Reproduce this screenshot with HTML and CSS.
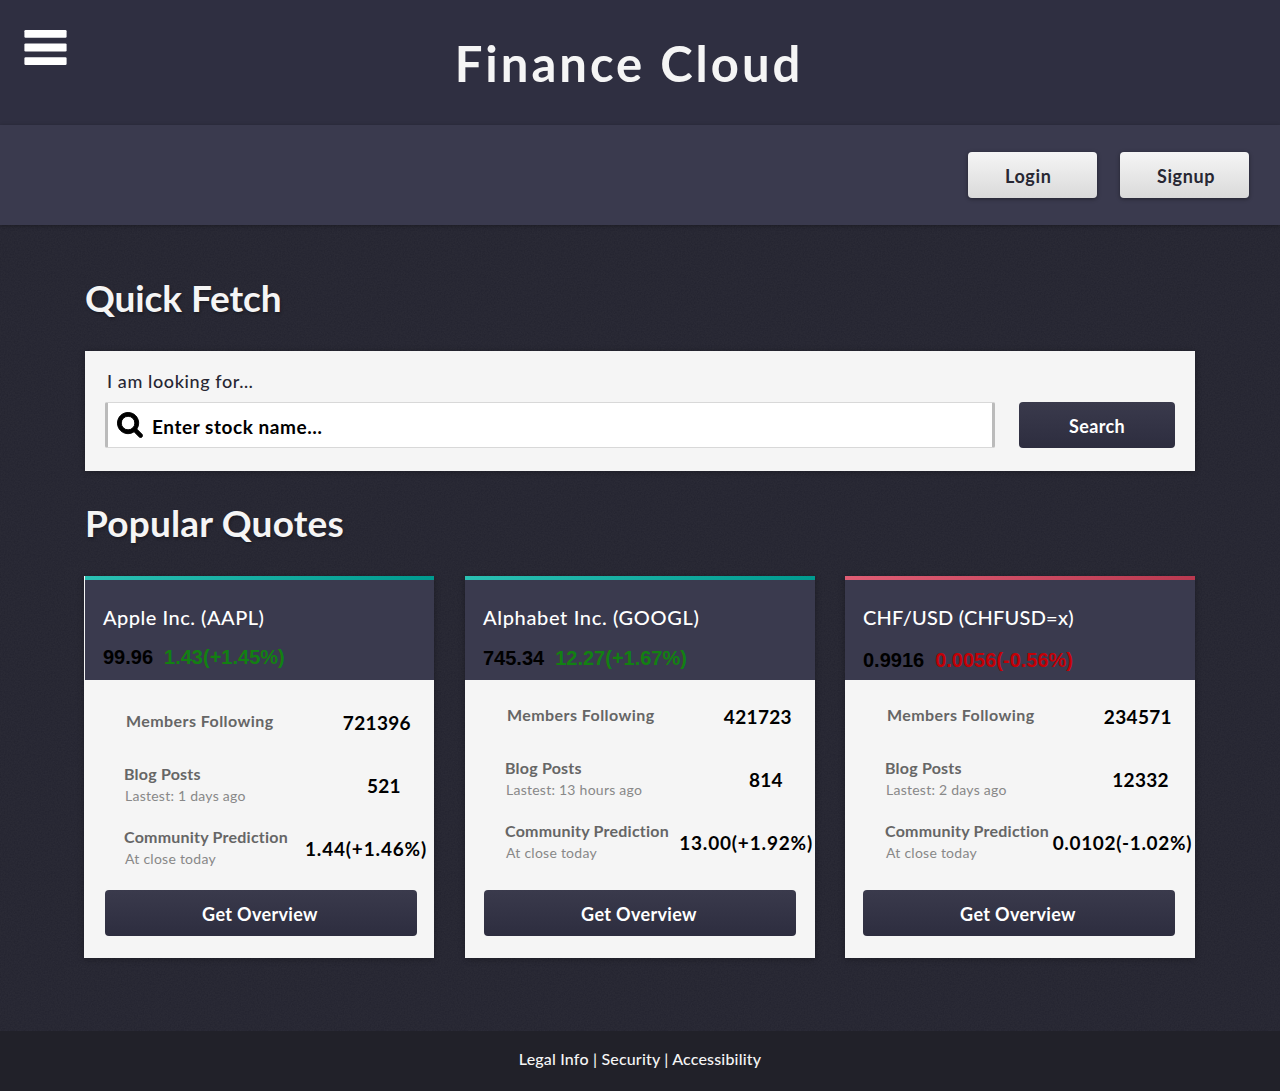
FILE: index.html
```html
<!DOCTYPE html>
<html lang="en">
<head>
<meta charset="utf-8">
<title>Finance Cloud</title>
<link rel="stylesheet" href="styles.css">
</head>
<body>
<header class="masthead">
  <button class="menu" aria-label="Menu">
    <svg width="43" height="36" viewBox="0 0 43 36" fill="#fff"><rect x=".4" width="42.2" height="7.8" rx="1.2"/><rect x=".4" y="13.4" width="42.200" height="8" rx="1.2"/><rect x=".4" y="27.2" width="42.200" height="7.800" rx="1.2"/></svg>
  </button>
  <h1 class="brand">Finance Cloud</h1>
</header>
<nav class="account">
  <a class="btn btn-light">Login</a>
  <a class="btn btn-light">Signup</a>
</nav>
<main class="content">
  <h2 class="heading">Quick Fetch</h2>
  <section class="fetch">
    <div class="field">
      <label class="field-label">I am looking for…</label>
      <div class="input">
        <svg class="glass" width="26" height="26" viewBox="-30 -30 1724 1724"><path d="M1152 704q0-185-131.500-316.500t-316.500-131.500-316.500 131.500-131.500 316.500 131.500 316.500 316.500 131.500 316.500-131.500 131.500-316.500zm512 832q0 52-38 90t-90 38q-54 0-90-38l-343-342q-179 124-399 124-143 0-273.500-55.500t-225-150-150-225-55.500-273.500 55.500-273.500 150-225 225-150 273.500-55.500 273.500 55.500 225 150 150 225 55.500 273.500q0 220-124 399l343 343q37 37 37 90z"/></svg>
        <span class="placeholder">Enter stock name…</span>
      </div>
    </div>
    <a class="btn btn-dark btn-search">Search</a>
  </section>
  <h2 class="heading heading-popular">Popular Quotes</h2>
  <section class="cards">
    <article class="card card-aapl">
      <header class="card-head up">
        <h3 class="name">Apple Inc. (AAPL)</h3>
        <p class="price"><span>99.96</span><span class="gain">1.43(+1.45%)</span></p>
      </header>
      <div class="stats">
        <div class="stat members">
          <div><p class="stat-name">Members Following</p></div>
          <p class="value">721396</p>
        </div>
        <div class="stat posts">
          <div><p class="stat-name">Blog Posts</p><p class="note">Lastest: 1 days ago</p></div>
          <p class="value">521</p>
        </div>
        <div class="stat prediction">
          <div><p class="stat-name">Community Prediction</p><p class="note">At close today</p></div>
          <p class="value">1.44(+1.46%)</p>
        </div>
      </div>
      <a class="btn btn-dark btn-overview">Get Overview</a>
    </article>
    <article class="card card-googl">
      <header class="card-head up">
        <h3 class="name">Alphabet Inc. (GOOGL)</h3>
        <p class="price"><span>745.34</span><span class="gain">12.27(+1.67%)</span></p>
      </header>
      <div class="stats">
        <div class="stat members">
          <div><p class="stat-name">Members Following</p></div>
          <p class="value">421723</p>
        </div>
        <div class="stat posts">
          <div><p class="stat-name">Blog Posts</p><p class="note">Lastest: 13 hours ago</p></div>
          <p class="value">814</p>
        </div>
        <div class="stat prediction">
          <div><p class="stat-name">Community Prediction</p><p class="note">At close today</p></div>
          <p class="value">13.00(+1.92%)</p>
        </div>
      </div>
      <a class="btn btn-dark btn-overview">Get Overview</a>
    </article>
    <article class="card card-chf">
      <header class="card-head down">
        <h3 class="name">CHF/USD (CHFUSD=x)</h3>
        <p class="price"><span>0.9916</span><span class="loss">0.0056(-0.56%)</span></p>
      </header>
      <div class="stats">
        <div class="stat members">
          <div><p class="stat-name">Members Following</p></div>
          <p class="value">234571</p>
        </div>
        <div class="stat posts">
          <div><p class="stat-name">Blog Posts</p><p class="note">Lastest: 2 days ago</p></div>
          <p class="value">12332</p>
        </div>
        <div class="stat prediction">
          <div><p class="stat-name">Community Prediction</p><p class="note">At close today</p></div>
          <p class="value">0.0102(-1.02%)</p>
        </div>
      </div>
      <a class="btn btn-dark btn-overview">Get Overview</a>
    </article>
  </section>
</main>
<footer class="footer">Legal Info | Security | Accessibility</footer>
</body>
</html>
```
FILE: styles.css
```css
* { box-sizing: border-box; margin: 0; padding: 0; }
body {
  min-height: 1091px;
  font-family: Lato, "Liberation Sans", sans-serif;
  background-color: #23232f;
  background-image: url("data:image/svg+xml,%3Csvg xmlns='http://www.w3.org/2000/svg' width='200' height='200'%3E%3Cfilter id='n'%3E%3CfeTurbulence type='fractalNoise' baseFrequency='.7' numOctaves='2' stitchTiles='stitch'/%3E%3CfeColorMatrix type='saturate' values='0'/%3E%3C/filter%3E%3Crect width='200' height='200' filter='url(%23n)' opacity='.06'/%3E%3C/svg%3E");
  display: flex;
  flex-direction: column;
}
.masthead { height: 125px; background: #2f2f41; display: grid; grid-template-columns: 67px 1fr 91px; align-items: start; }
.menu { border: 0; background: none; padding: 30px 0 0 24px; display: flex; }
.brand { font-size: 49px; line-height: 60px; padding: 33px 0 0 2px; letter-spacing: 3px; color: #f5f5f5; text-align: center; }
.account { height: 100px; background: #3a3a4e; display: flex; justify-content: flex-end; gap: 23px; padding: 27px 31px 0 0; box-shadow: 0 1px 4px rgba(0,0,0,.3); }
.btn { display: block; height: 46px; border-radius: 4px; font-size: 18px; font-weight: 700; line-height: 48px; white-space: nowrap; }
.btn-light { width: 129px; padding-left: 37px; letter-spacing: .6px; color: #272733; background: linear-gradient(#f5f5f5, #dadada); box-shadow: 0 1px 4px rgba(0,0,0,.4); }
.btn-dark { color: #fff; text-align: center; letter-spacing: .35px; background: linear-gradient(#3a3a4c, #2d2d3f); }
.content { flex: 1; padding: 49px 85px 0 84px; }
.heading { font-size: 37px; line-height: 48px; height: 48px; letter-spacing: -.1px; color: #f5f5f5; text-shadow: 1px 2px 3px rgba(0,0,0,.3); padding-left: 1px; }
.fetch { height: 120px; margin: 29px 0 0 1px; background: #f5f5f5; box-shadow: 0 1px 6px rgba(0,0,0,.3); padding: 20px; display: flex; gap: 24px; align-items: flex-start; }
.field { flex: 1; }
.field-label { display: block; height: 31px; line-height: 20px; font-size: 18px; font-weight: 500; letter-spacing: .6px; padding-left: 2px; color: #272733; }
.input { height: 46px; background: #fff; border: 1px solid #d8d8d8; border-width: 1px 3px; border-left-color: #bbb; border-right-color: #bbb; border-radius: 2px; display: flex; padding-left: 9px; gap: 9px; align-items: flex-start; }
.glass { margin-top: 8.5px; stroke: #000; stroke-width: 60px; }
.placeholder { font-size: 19px; font-weight: 700; letter-spacing: .55px; line-height: 48px; }
.btn-search { width: 156px; margin-top: 31px; }
.heading-popular { margin-top: 28px; letter-spacing: .2px; }
.cards { display: flex; margin-top: 29px; }
.card { width: 350px; height: 382px; background: #f5f5f5; box-shadow: 0 1px 6px rgba(0,0,0,.3); }
.card-aapl { margin-right: 31px; }
.card-googl { margin-right: 30px; }
.card-head { height: 104px; background: #3a3a4e; padding: 25px 18px 0; border-top: 4px solid; }
.card-aapl .card-head { margin-left: 1px; }
.up { border-image: linear-gradient(90deg, #2bc0b3, #009a8f) 4 0 0 0; }
.down { border-image: linear-gradient(90deg, #df5d74, #b93950) 4 0 0 0; }
.name { font-size: 20px; font-weight: 500; line-height: 24px; height: 24px; letter-spacing: .5px; color: #fff; }
.card-googl .name { letter-spacing: .65px; }
.card-chf .name { letter-spacing: .22px; }
.price { display: flex; gap: 11px; font: 700 20px/24px "Liberation Sans", Arial, sans-serif; padding-top: 16px; }
.card-googl .price { padding-top: 17px; }
.card-chf .price { padding-top: 19px; }
.gain { color: #128012; }
.loss { color: #c40006; }
.stats { height: 210px; padding-top: 25px; }
.card-aapl .stats { padding-top: 31px; }
.stat { display: flex; justify-content: space-between; padding-left: 40px; height: 63px; }
.members { padding-left: 42px; height: 53px; }
.stat-name { font-size: 16px; font-weight: 700; line-height: 20px; letter-spacing: .22px; color: #666; }
.members .stat-name { letter-spacing: .43px; }
.note { font-size: 14px; line-height: 20px; letter-spacing: .25px; padding: 2px 0 0 1px; color: #888; }
.value { font-size: 19px; font-weight: 700; line-height: 24px; letter-spacing: .35px; padding-right: 23px; }
.posts .value { padding: 10px 33px 0 0; }
.prediction .value { padding: 10px 7px 0 0; letter-spacing: .82px; }
.card-googl .posts .value { padding-right: 32px; }
.card-googl .prediction .value { padding-right: 2px; }
.card-chf .posts .value { padding-right: 26px; }
.card-chf .prediction .value { padding-right: 3px; letter-spacing: .65px; }
.btn-overview { width: 312px; margin-left: 19px; padding-right: 2px; }
.card-aapl .btn-overview { margin-left: 21px; }
.card-chf .btn-overview { margin-left: 18px; }
.footer { height: 60px; background: #212129; color: #f5f5f5; text-align: center; font-size: 16px; font-weight: 500; letter-spacing: .18px; line-height: 56px; }
```
